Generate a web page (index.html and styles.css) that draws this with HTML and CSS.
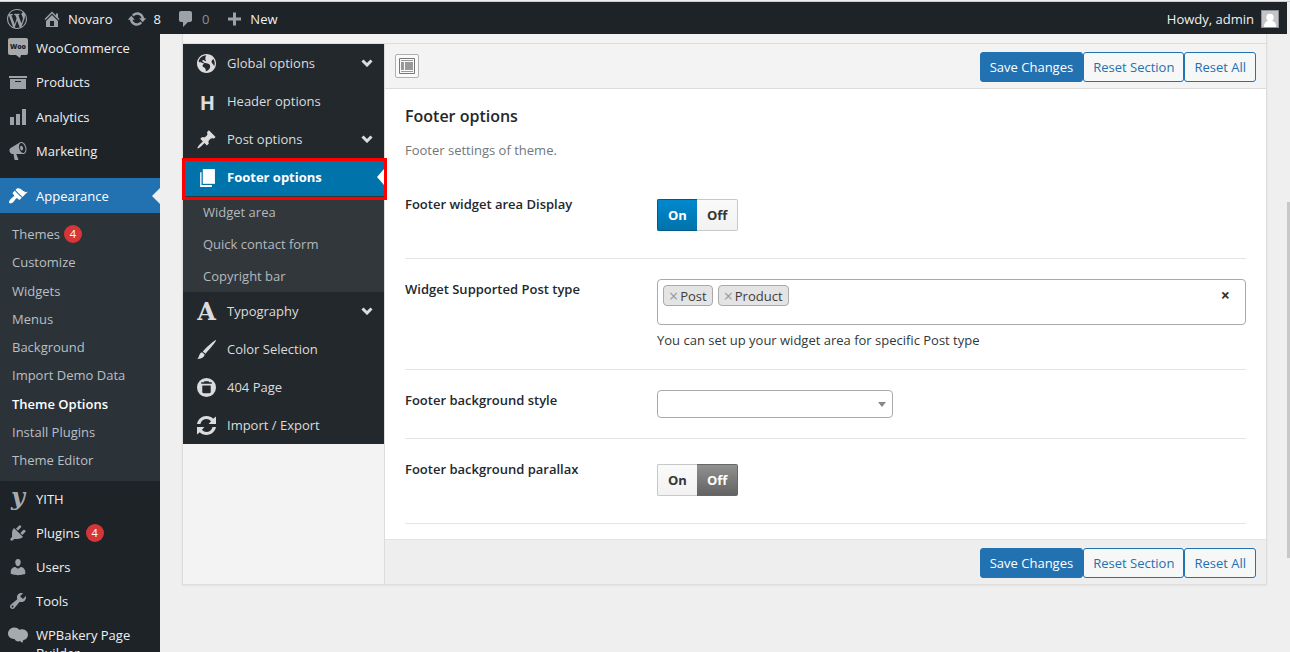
FILE: index.html
```html
<!DOCTYPE html>
<html lang="en">
<head>
<meta charset="utf-8">
<title>Theme Options</title>
<link rel="stylesheet" href="styles.css">
</head>
<body>
<div class="app">
  <header class="adminbar">
    <nav class="adminbar-nav" aria-label="Toolbar">
      <a class="bar-link bar-logo" href="#" aria-label="About WordPress"><svg class="icon" viewBox="0 0 20 20"><path d="M20 10c0-5.51-4.49-10-10-10C4.48 0 0 4.49 0 10c0 5.52 4.48 10 10 10 5.51 0 10-4.48 10-10zM7.78 15.37L4.37 6.22c.55-.02 1.17-.08 1.17-.08.5-.06.44-1.13-.06-1.11 0 0-1.45.11-2.37.11-.18 0-.37 0-.58-.01C4.12 2.69 6.87 1.11 10 1.11c2.33 0 4.45.87 6.05 2.34-.68-.11-1.65.39-1.65 1.58 0 .74.45 1.36.9 2.1.35.61.55 1.36.55 2.46 0 1.49-1.4 5-1.4 5l-3.03-8.37c.54-.02.82-.17.82-.17.5-.05.44-1.25-.06-1.22 0 0-1.44.12-2.38.12-.87 0-2.33-.12-2.33-.12-.5-.03-.56 1.2-.06 1.22l.92.08 1.26 3.41zM17.41 10c.24-.64.74-1.87.43-4.25.7 1.29 1.05 2.71 1.05 4.25 0 3.29-1.73 6.24-4.4 7.78.97-2.59 1.94-5.2 2.92-7.78zM6.1 18.09C3.12 16.65 1.11 13.53 1.11 10c0-1.3.23-2.48.72-3.59C3.25 10.3 4.67 14.2 6.1 18.09zm4.03-6.63l2.58 6.98c-.86.29-1.76.45-2.71.45-.79 0-1.57-.11-2.29-.33.81-2.38 1.62-4.74 2.42-7.1z"/></svg></a>
      <a class="bar-link" href="#"><svg class="icon" viewBox="0 0 20 20"><path d="M16 8.5l1.53 1.53-1.06 1.06L10 4.6l-6.47 6.49-1.06-1.06L10 2.5l4 4v-2h2v4zm-6-2.46l6 5.99V18H4v-5.97zM12 17v-5H8v5h4z"/></svg>Novaro</a>
      <a class="bar-link" href="#"><svg class="icon" viewBox="0 0 20 20"><path d="M10.2 3.28c3.53 0 6.43 2.61 6.92 6h2.08l-3.5 4-3.5-4h2.32c-.45-1.97-2.21-3.45-4.32-3.45-1.45 0-2.73.71-3.54 1.78L4.95 5.66C6.23 4.2 8.11 3.28 10.2 3.28zm-.4 13.44c-3.52 0-6.43-2.61-6.92-6H.8l3.5-4c1.17 1.33 2.33 2.67 3.5 4H5.48c.45 1.97 2.21 3.45 4.32 3.45 1.45 0 2.73-.71 3.54-1.78l1.71 1.95c-1.28 1.46-3.15 2.38-5.25 2.38z"/></svg>8</a>
      <a class="bar-link bar-link-muted" href="#"><svg class="icon" viewBox="0 0 20 20"><path d="M5 2h9c1.1 0 2 .9 2 2v7c0 1.1-.9 2-2 2h-2l-5 5v-5H5c-1.1 0-2-.9-2-2V4c0-1.1.9-2 2-2z"/></svg>0</a>
      <a class="bar-link" href="#"><svg class="icon" viewBox="0 0 20 20"><path d="M17 8.500v3h-5v5H9v-5H4v-3h5v-5h3v5h5z"/></svg>New</a>
    </nav>
    <a class="bar-user" href="#">Howdy, admin
      <svg class="avatar" viewBox="0 0 18 18"><rect x=".5" y=".5" width="17" height="17" fill="#c3c4c7" stroke="#8c8f94"/><circle cx="9" cy="7.500" r="3.700" fill="#fff"/><path d="M3 17c0-4 2-6.500 6-6.500s6 2.500 6 6.500z" fill="#fff"/></svg>
    </a>
  </header>

  <div class="body">
    <nav class="sidebar" aria-label="Main menu">
      <div class="menu-group menu-group-top">
        <a class="menu-link" href="#"><svg class="icon" viewBox="0 0 20 20"><path fill="#a7aaad" d="M2 0h16q2 0 2 2v13q0 2-2 2h-5l-1 3-4-3H2q-2 0-2-2V2Q0 0 2 0z"/><text class="woo-text" x="10" y="11" text-anchor="middle">Woo</text></svg>WooCommerce</a>
        <a class="menu-link" href="#"><svg class="icon" viewBox="0 0 20 20"><path d="M19 4v2H1V4h18zM2 7h16v10H2V7zm11 3V9H7v1h6z"/></svg>Products</a>
        <a class="menu-link" href="#"><svg class="icon" viewBox="0 0 20 20"><path d="M18 18V2h-4v16h4zm-6 0V7H8v11h4zm-6 0v-8H2v8h4z"/></svg>Analytics</a>
        <a class="menu-link" href="#"><svg class="icon" viewBox="0 0 20 20"><path d="M18.150 5.940c.46 1.620.38 3.220-.02 4.480-.42 1.280-1.260 2.180-2.300 2.480-.16.06-.26.06-.4.06-.06.02-.12.02-.18.02-.06.02-.14.02-.22.02h-6.800l2.220 5.500c.02.14-.06.26-.14.34-.08.1-.24.16-.34.16H6.950c-.1 0-.26-.06-.34-.16-.08-.08-.16-.2-.14-.34l-1-5.500H4.250l-.02-.02c-.5.06-1.080-.18-1.540-.62s-.88-1.080-1.060-1.880c-.24-.8-.2-1.560-.02-2.200.18-.62.58-1.080 1.060-1.300l.02-.02 9-5.400c.1-.06.18-.1.24-.16.06-.04.14-.08.24-.12.16-.08.28-.12.5-.18 1.040-.3 2.240.1 3.220.98s1.840 2.240 2.260 3.860zm-2.580 5.980h-.02c.4-.1.74-.34 1.040-.7.58-.7.86-1.760.86-3.040 0-.64-.1-1.300-.28-1.980-.34-1.360-1.020-2.500-1.780-3.240s-1.680-1.100-2.460-.88c-.82.22-1.400.96-1.700 2-.32 1.040-.28 2.360.06 3.720.38 1.360 1 2.500 1.800 3.240.78.74 1.620 1.100 2.480.88zm-2.540-7.080c.22-.04.42-.02.62.04.38.16.76.48 1.020 1s.42 1.200.42 1.780c0 .3-.04.56-.12.8-.18.48-.44.84-.86.94-.34.1-.8-.06-1.140-.4s-.64-.86-.78-1.500c-.18-.62-.12-1.240.02-1.720s.48-.84.82-.94z"/></svg>Marketing</a>
      </div>
      <a class="menu-link menu-link-current" href="#"><svg class="icon" viewBox="0 0 20 20"><path d="M14.480 11.060L7.410 3.990l1.500-1.500c.5-.56 2.300-.47 3.510.32 1.210.8 1.430 1.280 2.910 2.100 1.180.64 2.450 1.260 4.450.85zm-.71.71L6.700 4.700 4.930 6.470c-.39.39-.39 1.020 0 1.410l1.060 1.060c.39.39.39 1.030 0 1.420-.6.6-1.430 1.110-2.210 1.690-.35.26-.7.53-1.010.84C1.430 14.230.4 16.080 1.400 17.070c.99 1 2.840-.03 4.180-1.360.31-.31.58-.66.85-1.020.57-.78 1.080-1.610 1.690-2.210.39-.39 1.020-.39 1.410 0l1.060 1.060c.39.39 1.020.39 1.410 0z"/></svg>Appearance</a>
      <div class="submenu">
        <a class="submenu-link" href="#">Themes <span class="badge">4</span></a>
        <a class="submenu-link" href="#">Customize</a>
        <a class="submenu-link" href="#">Widgets</a>
        <a class="submenu-link" href="#">Menus</a>
        <a class="submenu-link" href="#">Background</a>
        <a class="submenu-link" href="#">Import Demo Data</a>
        <a class="submenu-link submenu-link-current" href="#">Theme Options</a>
        <a class="submenu-link" href="#">Install Plugins</a>
        <a class="submenu-link" href="#">Theme Editor</a>
      </div>
      <div class="menu-group menu-group-bottom">
        <a class="menu-link" href="#"><span class="icon icon-yith" aria-hidden="true">y</span>YITH</a>
        <a class="menu-link" href="#"><svg class="icon" viewBox="0 0 20 20"><path d="M13.110 4.360L9.870 7.600 8 5.730l3.240-3.240c.35-.34 1.050-.2 1.560.32.52.51.66 1.210.31 1.550zm-8 1.770l.91-1.120 9.010 9.010-1.190.84c-.71.71-2.630 1.160-3.820 1.160H6.140L4.900 17.260c-.59.59-1.540.59-2.120 0-.59-.58-.59-1.530 0-2.120l1.240-1.240v-3.880c0-1.130.4-3.190 1.090-3.890zm7.260 3.970l3.240-3.240c.34-.35 1.040-.21 1.550.31.52.51.66 1.210.31 1.550l-3.240 3.250z"/></svg>Plugins <span class="badge">4</span></a>
        <a class="menu-link" href="#"><svg class="icon" viewBox="0 0 20 20"><path d="M10 9.250c-2.270 0-2.730-3.440-2.730-3.440C7 4.020 7.820 2 9.970 2c2.160 0 2.980 2.020 2.710 3.810 0 0-.41 3.440-2.680 3.440zm0 2.570L12.720 10c2.390 0 4.520 2.330 4.520 4.530v2.490s-3.650 1.130-7.240 1.130c-3.650 0-7.240-1.130-7.240-1.130v-2.490c0-2.250 1.940-4.480 4.470-4.480z"/></svg>Users</a>
        <a class="menu-link" href="#"><svg class="icon" viewBox="0 0 20 20"><path d="M16.680 9.770c-1.340 1.340-3.300 1.670-4.950.99l-5.410 6.520c-.99.99-2.590.99-3.580 0s-.99-2.590 0-3.570l6.520-5.420c-.68-1.650-.35-3.610.99-4.950 1.280-1.280 3.120-1.620 4.720-1.060l-2.890 2.890 2.820 2.820 2.860-2.870c.53 1.580.18 3.390-1.080 4.650zM3.810 16.210c.4.39 1.040.39 1.430 0 .4-.4.4-1.040 0-1.430-.39-.4-1.030-.4-1.430 0-.39.39-.39 1.030 0 1.430z"/></svg>Tools</a>
        <a class="menu-link" href="#"><svg class="icon" viewBox="0 0 20 20"><path fill="#a7aaad" d="M6.500 2.500c2 0 3.600.8 4.600 2.300 1-.5 2-.7 3.400-.6 3 .3 5.500 2.300 5.500 5.300s-2 5.300-4.600 5.500c-.3.800-.8 1.600-1 2.700-1-.3-1.800-.8-2.400-1.600-1 .4-2.800.6-4-.3-.8-.5-1.200-1-1.400-1.800C2.800 14 0 11.800 0 8.500s2.800-6 6.500-6z"/></svg>WPBakery Page Builder</a>
      </div>
    </nav>

    <main class="content">
      <div class="panel">
        <div class="panel-head"></div>
        <div class="panel-body">
          <nav class="options-nav" aria-label="Option sections">
            <div class="options-list">
              <a class="option-link" href="#"><svg class="option-icon" viewBox="0 0 18 18"><path d="M9 0C4.030 0 0 4.030 0 9s4.030 9 9 9 9-4.030 9-9-4.030-9-9-9zm3.460 11.950c0 1.470-.8 3.300-4.060 4.700.3-4.170-2.520-3.690-3.200-5 .126-1.100.804-2.063 1.800-2.550-1.552-.266-3-.96-4.180-2 .05.47.28.904.64 1.210-.782-.295-1.458-.817-1.940-1.500.977-3.225 3.883-5.482 7.250-5.630-.84 1.380-1.500 4.130 0 5.570C7.230 7 6.260 5 5.410 5.790c-1.130 1.060.33 2.510 3.420 3.080 3.290.59 3.660 1.580 3.630 3.080zm1.340-4c-.32-1.110.62-2.230 1.690-3.140 1.356 1.955 1.670 4.450.84 6.680-.77-1.890-2.170-2.320-2.530-3.570z"/></svg><span class="option-text">Global options</span><svg class="chevron" viewBox="0 0 12 8"><path d="M1.500 1.500L6 6l4.500-4.500"/></svg></a>
              <a class="option-link" href="#"><span class="option-icon icon-h" aria-hidden="true">H</span><span class="option-text">Header options</span></a>
              <a class="option-link" href="#"><svg class="option-icon" viewBox="1 1 18 18"><path d="M10.440 3.020l1.820-1.820 6.360 6.350-1.830 1.820c-1.050-.68-2.480-.57-3.410.36l-.75.75c-.92.93-1.040 2.350-.35 3.410l-1.830 1.820-2.410-2.410-2.800 2.790c-.42.42-3.380 2.710-3.800 2.290s1.860-3.390 2.280-3.810l2.790-2.790L4.100 9.360l1.830-1.820c1.050.69 2.480.57 3.400-.36l.75-.75c.93-.92 1.050-2.350.36-3.410z"/></svg><span class="option-text">Post options</span><svg class="chevron" viewBox="0 0 12 8"><path d="M1.500 1.500L6 6l4.500-4.500"/></svg></a>
              <a class="option-link option-link-current" href="#"><svg class="option-icon" viewBox="0 0 18 18"><path d="M5.500 1H17v14H5.500z"/><path d="M3 4h1.300v12.200H14V18H3z"/></svg><span class="option-text">Footer options</span></a>
              <div class="option-sub">
                <a class="option-sublink" href="#">Widget area</a>
                <a class="option-sublink" href="#">Quick contact form</a>
                <a class="option-sublink" href="#">Copyright bar</a>
              </div>
              <a class="option-link" href="#"><span class="option-icon icon-a" aria-hidden="true">A</span><span class="option-text">Typography</span><svg class="chevron" viewBox="0 0 12 8"><path d="M1.500 1.500L6 6l4.500-4.500"/></svg></a>
              <a class="option-link" href="#"><svg class="option-icon" viewBox="0 0 18 18"><path d="M18 0c.3 1-3 5.500-10 13L5.500 10.800C12 4 17 0 18 0zM4.800 11.500l2.500 2.300c-.8 2.800-3 4.200-7.300 4.200 2.500-1.500 1.500-5.500 4.800-6.500z"/></svg><span class="option-text">Color Selection</span></a>
              <a class="option-link" href="#"><svg class="option-icon" viewBox="0 0 18 18"><path fill-rule="evenodd" d="M9 0a9 9 0 1 1 0 18A9 9 0 0 1 9 0zM7 3l-.5 1H4v1.500h10V4h-2.500L11 3zM5 7v6q0 1.500 1.500 1.500h5q1.500 0 1.500-1.500V7z"/></svg><span class="option-text">404 Page</span></a>
              <a class="option-link" href="#"><svg class="option-icon" viewBox="0 0 18 18"><path d="M0 7.500C1 3 4.500 0 9 0c2.600 0 4.800 1 6.300 2.600L18 .5v7h-7l2.300-2.600C12 3.600 10.700 2.800 9 2.800c-2.700 0-5 1.700-5.800 4.700zM18 10.500C17 15 13.500 18 9 18c-2.600 0-4.800-1-6.300-2.600L0 17.500v-7h7l-2.300 2.600C6 14.400 7.300 15.200 9 15.200c2.700 0 5-1.700 5.800-4.700z"/></svg><span class="option-text">Import / Export</span></a>
            </div>
          </nav>

          <form class="settings">
            <div class="actions actions-top">
              <button class="layout-toggle" type="button" aria-label="Expand options"><svg class="layout-icon" viewBox="0 0 16 16"><path fill="none" stroke="#777" d="M.5.500h15v15H.5z"/><path fill="#999" d="M2 2h12v1H2zM2 4h3v8H2zM6 4h8v8H6zM2 13h12v1H2z"/></svg></button>
              <div class="button-row">
                <button class="button button-primary" type="submit">Save Changes</button>
                <button class="button" type="button">Reset Section</button>
                <button class="button" type="button">Reset All</button>
              </div>
            </div>

            <div class="section">
              <h2 class="section-title">Footer options</h2>
              <p class="section-desc">Footer settings of theme.</p>

              <div class="field">
                <span class="field-label" id="area-label">Footer widget area Display</span>
                <div class="switch" role="radiogroup" aria-labelledby="area-label">
                  <label class="switch-option switch-on"><input class="switch-input" type="radio" name="area" checked>On</label>
                  <label class="switch-option switch-off"><input class="switch-input" type="radio" name="area">Off</label>
                </div>
              </div>

              <div class="field">
                <label class="field-label" for="post-types">Widget Supported Post type</label>
                <div class="field-control">
                  <div class="tags">
                    <span class="tag"><button class="tag-remove" type="button" aria-label="Remove Post">×</button>Post</span>
                    <span class="tag"><button class="tag-remove" type="button" aria-label="Remove Product">×</button>Product</span>
                    <input class="tags-input" id="post-types" type="text">
                    <button class="tags-clear" type="button" aria-label="Clear all">×</button>
                  </div>
                  <p class="field-help">You can set up your widget area for specific Post type</p>
                </div>
              </div>

              <div class="field">
                <label class="field-label" for="bg-style">Footer background style</label>
                <div class="select">
                  <select class="select-input" id="bg-style"><option value=""></option></select>
                </div>
              </div>

              <div class="field">
                <span class="field-label" id="parallax-label">Footer background parallax</span>
                <div class="switch" role="radiogroup" aria-labelledby="parallax-label">
                  <label class="switch-option switch-on"><input class="switch-input" type="radio" name="parallax">On</label>
                  <label class="switch-option switch-off"><input class="switch-input" type="radio" name="parallax" checked>Off</label>
                </div>
              </div>
            </div>

            <div class="actions actions-bottom">
              <div class="button-row">
                <button class="button button-primary" type="submit">Save Changes</button>
                <button class="button" type="button">Reset Section</button>
                <button class="button" type="button">Reset All</button>
              </div>
            </div>
          </form>
        </div>
      </div>
    </main>
  </div>
  <div class="scroll-thumb"></div>
</div>
</body>
</html>
```

FILE: styles.css
```css
* {
  box-sizing: border-box;
}

body {
  margin: 0;
  background: #efefef;
  color: #3c434a;
  font: 13px/18px "Open Sans", "Noto Sans", sans-serif;
}

a {
  color: inherit;
  text-decoration: none;
}

button,
input,
select {
  font: inherit;
}

.app {
  position: relative;
  display: flex;
  flex-direction: column;
  height: 100vh;
  padding-right: 3px;
  overflow: hidden;
}

.app::before {
  content: "";
  flex: none;
  height: 1px;
  margin-right: -3px;
  border-bottom: 1px solid #c9cdd1;
}

.scroll-thumb {
  position: absolute;
  top: 31%;
  right: 0;
  bottom: 94px;
  width: 3px;
  background: #c8c8c8;
}

.icon {
  display: block;
  flex: none;
  width: 20px;
  height: 20px;
  margin: -1px 0;
  fill: #9ca2a7;
}

/* Admin bar */

.adminbar {
  position: relative;
  z-index: 1;
  display: flex;
  flex: none;
  justify-content: space-between;
  height: 32px;
  padding: 1px 8px 0 7px;
  background: #1d2327;
  color: #f0f0f1;
}

.adminbar-nav {
  display: flex;
  gap: 15px;
}

.bar-link,
.bar-user {
  display: flex;
  align-items: center;
  gap: 6px;
}

.bar-link-muted {
  color: #8c9196;
}

.bar-user {
  gap: 7px;
}

.avatar {
  width: 18px;
  height: 18px;
}

.body {
  display: flex;
  flex: 1;
  min-height: 0;
}

/* Sidebar */

.sidebar {
  flex: none;
  width: 160px;
  background: #1d2327;
  color: #f0f0f1;
}

.menu-group {
  display: flex;
  flex-direction: column;
  justify-content: space-between;
}

.menu-group-top {
  min-height: 137px;
  margin: -3px 0 10px;
}

.menu-link {
  display: flex;
  gap: 8px;
  padding: 8px;
}

.menu-link-current {
  position: relative;
  height: 35px;
  padding-top: 9px;
  background: #2271b1;
  color: #fff;
}

.menu-link-current .icon {
  fill: #fff;
}

.menu-link-current::after {
  content: "";
  position: absolute;
  top: 10px;
  right: 0;
  border: 8px solid transparent;
  border-left: 0;
  border-right-color: #efefef;
}

.submenu {
  display: flex;
  flex-direction: column;
  justify-content: space-between;
  min-height: 268px;
  padding: 7px 12px;
  background: #2c3338;
  color: #b9bfc5;
}

.submenu-link {
  display: flex;
  align-items: center;
  gap: 4px;
  height: 28px;
}

.submenu-link-current {
  color: #fff;
  font-weight: 600;
}

.badge {
  width: 18px;
  height: 18px;
  border-radius: 9px;
  background: #d63638;
  color: #fff;
  font-size: 11px;
  text-align: center;
}

.menu-link .badge {
  margin-left: -2px;
}

.menu-group-bottom {
  padding-top: 1px;
}

.woo-text {
  fill: #1d2327;
  font: 800 7px "Open Sans", sans-serif;
}

.icon-yith {
  color: #a7aaad;
  font: italic bold 24px/16px "DejaVu Serif", serif;
  text-align: center;
}

/* Options panel */

.content {
  flex: 1;
  min-width: 0;
  padding: 0 20px 0 22px;
}

.panel {
  border: 1px solid #dcdcdc;
  border-top: 0;
  background: #f3f3f3;
  box-shadow: 0 1px 2px #e2e2e2;
}

.panel-head {
  height: 10px;
  border-bottom: 1px solid #dcdcdc;
}

.panel-body {
  display: flex;
}

.options-nav {
  flex: none;
  width: 201px;
}

.options-list {
  background: #23282d;
  color: #dcdcdc;
}

.option-link {
  display: flex;
  align-items: center;
  gap: 11px;
  height: 38px;
  padding: 0 11px 0 14px;
}

.option-icon {
  flex: none;
  width: 19px;
  height: 19px;
  fill: #dcdcdc;
}

.option-text {
  flex: 1;
}

.icon-h {
  padding-left: 2px;
  font-size: 20px;
  font-weight: 700;
  line-height: 22px;
  text-align: center;
}

.icon-a {
  font: bold 24px/20px "DejaVu Serif", serif;
  text-align: center;
}

.chevron {
  width: 12px;
  height: 8px;
  fill: none;
  stroke: #dcdcdc;
  stroke-width: 3;
}

.option-link-current {
  position: relative;
  background: #0073aa;
  color: #fff;
  font-weight: 700;
}

.option-link-current .option-icon {
  fill: #fff;
}

.option-link-current::before {
  content: "";
  position: absolute;
  top: 11px;
  right: 0;
  border: 8px solid transparent;
  border-left: 0;
  border-right: 7px solid #fff;
}

.option-link-current::after {
  content: "";
  position: absolute;
  inset: 0 -3px -4px -1px;
  z-index: 1;
  border: 3px solid #f00;
}

.option-sub {
  background: #32373c;
  color: #b4b9be;
}

.option-sublink {
  display: block;
  padding: 7px 20px;
}

.settings {
  flex: 1;
  min-width: 0;
  border-left: 1px solid #dcdcdc;
}

.actions {
  display: flex;
  align-items: center;
  justify-content: space-between;
  padding: 8px 10px 6px;
}

.actions-top {
  border-bottom: 1px solid #dcdcdc;
}

.actions-bottom {
  justify-content: flex-end;
  border-top: 1px solid #e3e3e3;
  background: #eee;
}

.layout-toggle {
  width: 24px;
  height: 24px;
  margin-bottom: 2px;
  padding: 3px;
  border: 1px solid #b0b0b0;
  border-radius: 2px;
  background: #fafafa;
}

.layout-icon {
  display: block;
  width: 16px;
  height: 16px;
}

.button-row {
  display: flex;
}

.button {
  height: 30px;
  padding: 0 9px;
  border: 1px solid #2271b1;
  border-radius: 3px;
  background: #f6f7f7;
  color: #2271b1;
}

.button-primary {
  background: #2271b1;
  color: #fff;
}

.section {
  padding: 16px 20px 15px;
  background: #fff;
}

.section-title {
  margin: 0 0 14px;
  color: #23282d;
  font-size: 16px;
  font-weight: 600;
  line-height: 22px;
}

.section-desc {
  margin: 0;
  padding-bottom: 15px;
  color: #72777c;
}

.field {
  display: grid;
  grid-template-columns: 252px minmax(0, 1fr);
  align-items: start;
  padding: 20px 0;
  border-bottom: 1px solid #e5e5e5;
}

.field-label {
  padding-top: 1px;
  color: #23282d;
  font-weight: 600;
}

.field-help {
  margin: 6px 0 0;
  color: #32373c;
}

.switch {
  display: flex;
  margin: 5px 0 7px;
}

.switch-option {
  height: 32px;
  padding: 6px 10px;
  border: 1px solid #c8c8c8;
  background: linear-gradient(#fafafa, #f2f2f2);
  color: #32373c;
  font-weight: 700;
}

.switch-input {
  position: absolute;
  opacity: 0;
}

.switch-on {
  border-right: 0;
  border-radius: 2px 0 0 2px;
}

.switch-off {
  border-left: 0;
  border-radius: 0 2px 2px 0;
}

.switch-on:has(:checked) {
  border-color: #005a87;
  background: linear-gradient(#0089cf, #0073aa);
  color: #fff;
}

.switch-off:has(:checked) {
  border-color: #666;
  background: linear-gradient(#909090, #636363);
  color: #fff;
}

.tags {
  display: flex;
  align-items: flex-start;
  gap: 5px;
  height: 46px;
  padding: 5px;
  border: 1px solid #aaa;
  border-radius: 4px;
}

.tag {
  display: flex;
  gap: 2px;
  height: 21px;
  padding: 0 5px;
  border: 1px solid #aaa;
  border-radius: 4px;
  background: #e4e4e4;
  color: #3c3c3c;
  line-height: 20px;
}

.tag-remove,
.tags-clear {
  padding: 0;
  border: 0;
  background: none;
  color: #999;
  font-size: 16px;
  line-height: 20px;
}

.tags-input {
  flex: 1;
  min-width: 0;
  height: 20px;
  border: 0;
  outline: 0;
  background: none;
}

.tags-clear {
  padding: 0 10px;
  color: #333;
  font-weight: 700;
}

.select {
  position: relative;
  width: 236px;
}

.select::after {
  content: "";
  position: absolute;
  top: 12px;
  right: 7px;
  border: 4px solid transparent;
  border-top: 5px solid #888;
  border-bottom: 0;
  pointer-events: none;
}

.select-input {
  display: block;
  width: 100%;
  height: 28px;
  appearance: none;
  border: 1px solid #aaa;
  border-radius: 4px;
  background: #fff;
}
```
